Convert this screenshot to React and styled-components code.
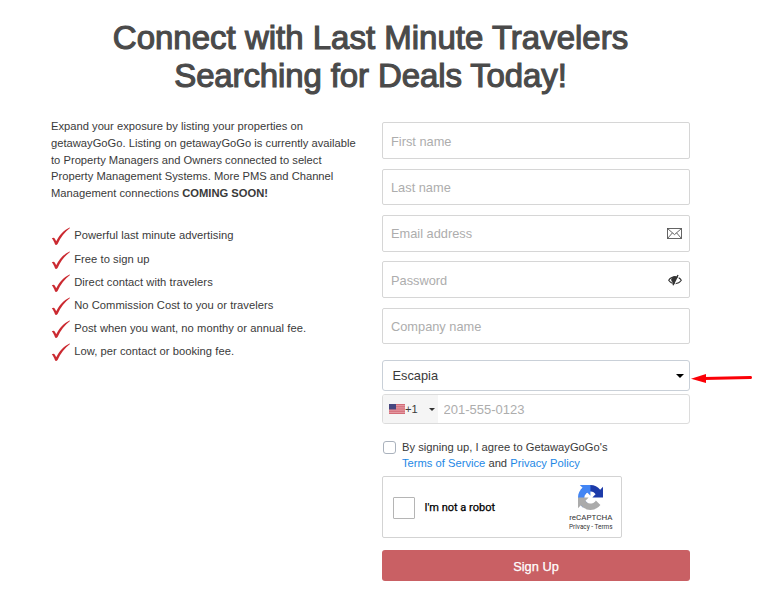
import React from "react";
import styled, { createGlobalStyle } from "styled-components";

const GlobalStyle = createGlobalStyle`
  * {
    box-sizing: border-box;
  }

  body {
    margin: 0;
    background: #fff;
    color: #3a3a3a;
    font-family: "Liberation Sans", Arial, sans-serif;
    font-size: 11.2px;
  }

  input, button {
    font-family: inherit;
  }
`;

const Page = styled.main`
  width: 762px;
  height: 596px;
  padding: 19px 72px 0 51px;
  overflow: hidden;
`;

const Title = styled.h1`
  margin: 0;
  color: #4a4a4a;
  font-size: 33px;
  font-weight: 400;
  line-height: 38px;
  text-align: center;
  white-space: nowrap;
  -webkit-text-stroke: 1.15px #4a4a4a;
`;

const TitleLine = styled.span`
  display: block;
  letter-spacing: ${(props) => props.$spacing || "0"};
`;

const Columns = styled.div`
  display: grid;
  grid-template-columns: 307px 308px;
  justify-content: space-between;
  align-items: start;
`;

const Intro = styled.section`
  padding-top: 23.4px;
`;

const IntroText = styled.p`
  margin: 0;
  line-height: 16.6px;
  white-space: nowrap;
`;

const Benefits = styled.ul`
  list-style: none;
  margin: 22px 0 0;
  padding: 0;
`;

const Benefit = styled.li`
  display: flex;
  gap: 4.5px;
  height: 23.2px;
  line-height: 24px;
  letter-spacing: 0.04px;
  white-space: nowrap;

  svg {
    flex: none;
    width: 19px;
    height: 19px;
    margin: 4px 0 0 -0.3px;
  }
`;

const Form = styled.form`
  padding-top: 27.3px;
`;

const Fields = styled.div`
  display: flex;
  flex-direction: column;
  gap: 9.9px;
`;

const Field = styled.label`
  display: flex;
  align-items: center;
  height: 36.5px;
  padding: 0 7px 0 8px;
  border: 1px solid #d6d6d6;
  border-radius: 2px;

  svg {
    flex: none;
  }
`;

const Input = styled.input`
  flex: 1;
  min-width: 0;
  padding: 1px 0 0;
  border: 0;
  outline: 0;
  background: transparent;
  color: #3a3a3a;
  font-size: ${(props) => props.$size || "12.8px"};

  &::placeholder {
    color: #adadad;
    opacity: 1;
  }
`;

const Select = styled.div`
  position: relative;
  display: flex;
  align-items: center;
  justify-content: space-between;
  height: 31px;
  margin-top: 15.7px;
  padding: 0 5px 0 9.5px;
  border: 1px solid #c9d0d8;
  border-radius: 3px;
  font-size: 12.8px;
`;

const Caret = styled.span`
  border-left: ${(props) => props.$size}px solid transparent;
  border-right: ${(props) => props.$size}px solid transparent;
  border-top: ${(props) => props.$size}px solid ${(props) => props.$color};
`;

const Pointer = styled.svg`
  position: absolute;
  left: 307px;
  top: 11px;
  width: 63px;
  height: 12px;
`;

const Phone = styled.div`
  display: flex;
  height: 30px;
  margin-top: 3px;
  border: 1px solid #dcdcdc;
  border-radius: 3px;
  overflow: hidden;
`;

const DialCode = styled.div`
  display: flex;
  align-items: center;
  width: 55px;
  margin-right: 5.5px;
  padding: 0 3px 0 6px;
  background: #f5f5f5;
  font-size: 11.2px;
`;

const Prefix = styled.span`
  flex: 1;
`;

const Terms = styled.label`
  display: flex;
  gap: 6px;
  margin-top: 15px;
  line-height: 16px;
  white-space: nowrap;

  a {
    color: #1e88e5;
    text-decoration: none;
  }
`;

const CheckBox = styled.input`
  appearance: none;
  width: 13px;
  height: 13px;
  margin: 2px 0 0 1px;
  border: 1px solid #aab2bd;
  border-radius: 3px;
`;

const Captcha = styled.div`
  display: flex;
  align-items: center;
  width: 240px;
  height: 62px;
  margin-top: 5px;
  padding: 1px 8.5px 0 10px;
  border: 1px solid #d3d3d3;
  border-radius: 2px;
  color: #000;
  font-family: Roboto, sans-serif;
`;

const CaptchaBox = styled.span`
  width: 22px;
  height: 22px;
  margin-right: 9.5px;
  border: 1px solid #b5b5b5;
  border-radius: 1px;
`;

const CaptchaLabel = styled.span`
  flex: 1;
  font-size: 11px;
  white-space: nowrap;
  -webkit-text-stroke: 0.25px #000;
`;

const CaptchaBrand = styled.div`
  display: flex;
  flex-direction: column;
  align-items: center;
  padding-top: 1px;
  color: #333;
  white-space: nowrap;

  svg {
    width: 25px;
    height: 25px;
  }
`;

const BrandName = styled.span`
  margin-top: 2px;
  font-size: 8px;
  line-height: 11px;
`;

const BrandLinks = styled.span`
  font-size: 6.4px;
  line-height: 9px;
`;

const SubmitButton = styled.button`
  display: block;
  width: 100%;
  height: 31px;
  margin-top: 12px;
  padding: 2px 0 0;
  border: 0;
  border-radius: 3px;
  background: #c96064;
  color: #fff;
  font-size: 12.8px;
  -webkit-text-stroke: 0.25px #fff;
`;

const benefits = [
  "Powerful last minute advertising",
  "Free to sign up",
  "Direct contact with travelers",
  "No Commission Cost to you or travelers",
  "Post when you want, no monthy or annual fee.",
  "Low, per contact or booking fee.",
];

const CheckMark = () => (
  <svg viewBox="0 0 19 19">
    <path
      d="M.8 11.6C1.8 10.2 3.2 10.4 3.9 11.8L5.2 14.3C8.2 8.2 12.5 3.2 18.6.4L19 .9C13.8 4.8 9.5 10.3 6.6 16.9C5.7 18.2 4.5 18.5 3.9 17.1C3 14.7 2.3 13 .8 11.6Z"
      fill="#cb2a31"
    />
  </svg>
);

const MailIcon = () => (
  <svg width="15" height="11" viewBox="0 0 15 11" fill="none" stroke="#555" strokeWidth="0.9">
    <rect x="0.5" y="0.5" width="14" height="10" />
    <path d="M.7.7L7.5 6.6L14.3.7M.7 10.3L5.4 4.9M14.3 10.3L9.6 4.9" />
  </svg>
);

const HiddenIcon = () => (
  <svg width="14" height="12" viewBox="0 0 14 12" fill="none" stroke="#333">
    <path d="M.7 6.3C3.5 1.7 10.5 1.7 13.3 6.3C10.5 10.7 3.5 10.7 .7 6.3Z" strokeWidth="1.1" />
    <path d="M8.6 3.4A3 3 0 0 0 4.2 7.4L5.7 9.2Z" fill="#333" strokeWidth="1" />
    <path d="M11.2 1.6L6.2 11.2" stroke="#fff" strokeWidth="1.1" />
    <path d="M10 1L5 11.2" strokeWidth="1.4" />
  </svg>
);

const Flag = () => (
  <svg width="16" height="10" viewBox="0 0 16 10">
    <rect width="16" height="10" fill="#e8a3aa" />
    <path d="M0 .5H16M0 2.3H16M0 4.1H16M0 5.9H16M0 7.7H16M0 9.5H16" stroke="#cf6572" strokeWidth="0.9" />
    <rect width="7" height="5.4" fill="#46467f" />
  </svg>
);

const RecaptchaLogo = () => (
  <svg viewBox="0 0 64 64">
    <path
      fill="#1c3aa9"
      d="M64 31.955l-.033-1.37V4.687l-7.16 7.16C50.948 4.674 42.033.093 32.05.093c-10.4 0-19.622 4.96-25.458 12.64l11.736 11.86a15.55 15.55 0 0 1 4.754-5.334c2.05-1.6 4.952-2.906 8.968-2.906.485 0 .86.057 1.135.163 4.976.393 9.288 3.14 11.828 7.124l-8.307 8.307L64 31.953"
    />
    <path
      fill="#4285f4"
      d="M31.862.094l-1.37.033H4.594l7.16 7.16C4.58 13.147 0 22.06 0 32.046c0 10.4 4.96 19.622 12.64 25.458L24.5 45.768a15.55 15.55 0 0 1-5.334-4.754c-1.6-2.05-2.906-4.952-2.906-8.968 0-.485.057-.86.163-1.135.393-4.976 3.14-9.288 7.124-11.828l8.307 8.307L31.86.095"
    />
    <path
      fill="#ababab"
      d="M.001 32.045l.033 1.37v25.898l7.16-7.16c5.86 7.173 14.774 11.754 24.76 11.754 10.4 0 19.622-4.96 25.458-12.64l-11.736-11.86a15.55 15.55 0 0 1-4.754 5.334c-2.05 1.6-4.952 2.906-8.968 2.906-.485 0-.86-.057-1.135-.163-4.976-.393-9.288-3.14-11.828-7.124l8.307-8.307L.001 32.046"
    />
  </svg>
);

function App() {
  return (
    <Page>
      <GlobalStyle />
      <Title>
        <TitleLine>Connect with Last Minute Travelers</TitleLine>
        <TitleLine $spacing="-0.12px">Searching for Deals Today!</TitleLine>
      </Title>

      <Columns>
        <Intro>
          <IntroText>
            Expand your exposure by listing your properties on
            <br />
            getawayGoGo. Listing on getawayGoGo is currently available
            <br />
            to Property Managers and Owners connected to select
            <br />
            Property Management Systems. More PMS and Channel
            <br />
            Management connections <strong>COMING SOON!</strong>
          </IntroText>
          <Benefits>
            {benefits.map((text) => (
              <Benefit key={text}>
                <CheckMark />
                {text}
              </Benefit>
            ))}
          </Benefits>
        </Intro>

        <Form>
          <Fields>
            <Field>
              <Input placeholder="First name" />
            </Field>
            <Field>
              <Input placeholder="Last name" />
            </Field>
            <Field>
              <Input type="email" placeholder="Email address" />
              <MailIcon />
            </Field>
            <Field>
              <Input type="password" placeholder="Password" />
              <HiddenIcon />
            </Field>
            <Field>
              <Input placeholder="Company name" />
            </Field>
          </Fields>

          <Select>
            Escapia
            <Caret $size={4.5} $color="#000" />
            {/* Red arrow pointing at the PMS select */}
            <Pointer viewBox="0 0 63 12">
              <path d="M1 6.8L16 2V11Z" fill="#fb0007" />
              <path d="M14 6.5L60.5 5.6" stroke="#fb0007" strokeWidth="3" strokeLinecap="round" />
            </Pointer>
          </Select>

          <Phone>
            <DialCode>
              <Flag />
              <Prefix>+1</Prefix>
              <Caret $size={3} $color="#333" />
            </DialCode>
            <Input $size="13px" placeholder="201-555-0123" />
          </Phone>

          <Terms>
            <CheckBox type="checkbox" />
            <span>
              By signing up, I agree to GetawayGoGo's
              <br />
              <a href="#terms">Terms of Service</a> and <a href="#privacy">Privacy Policy</a>
            </span>
          </Terms>

          <Captcha>
            <CaptchaBox />
            <CaptchaLabel>I'm not a robot</CaptchaLabel>
            <CaptchaBrand>
              <RecaptchaLogo />
              <BrandName>reCAPTCHA</BrandName>
              <BrandLinks>Privacy - Terms</BrandLinks>
            </CaptchaBrand>
          </Captcha>

          <SubmitButton type="button">Sign Up</SubmitButton>
        </Form>
      </Columns>
    </Page>
  );
}

export default App;
